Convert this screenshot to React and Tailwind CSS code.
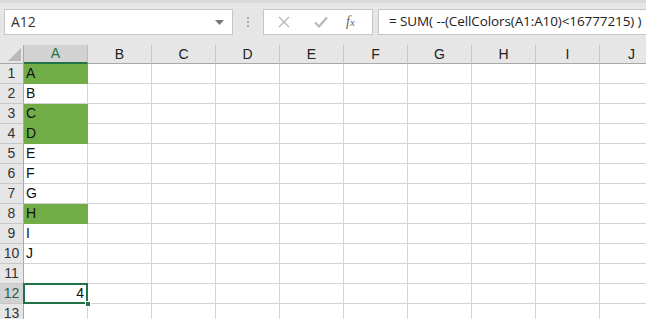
import React from "react";

const cols = ["A", "B", "C", "D", "E", "F", "G", "H", "I", "J"];
const data = {
  1: { t: "A", g: true },
  2: { t: "B" },
  3: { t: "C", g: true },
  4: { t: "D", g: true },
  5: { t: "E" },
  6: { t: "F" },
  7: { t: "G" },
  8: { t: "H", g: true },
  9: { t: "I" },
  10: { t: "J" },
};
const rows = Array.from({ length: 13 }, (_, i) => i + 1);

export default function App() {
  return (
    <div className="w-[646px] h-[319px] overflow-hidden bg-white font-['Open_Sans','Liberation_Sans',sans-serif]">
      {/* formula bar */}
      <div className="h-[45px] bg-[#e6e6e6] border-t-[3px] border-[#dadada] flex items-start pt-[6px]">
        <div className="ml-[4px] w-[229px] h-[26px] shrink-0 bg-white border border-[#c6c6c6] flex items-center justify-between pl-[6px] pr-[8px]">
          <span className="text-[14px] text-[#333] leading-none">A12</span>
          <svg width="9" height="5" viewBox="0 0 9 5"><path d="M0 0 L9 0 L4.5 5 Z" fill="#777" /></svg>
        </div>
        <div className="w-[30px] h-[26px] shrink-0 flex flex-col items-center justify-center gap-[2px]">
          <div className="w-[2px] h-[2px] bg-[#aaa]" />
          <div className="w-[2px] h-[2px] bg-[#aaa]" />
          <div className="w-[2px] h-[2px] bg-[#aaa]" />
        </div>
        <div className="w-[110px] h-[26px] shrink-0 bg-white border border-[#c6c6c6] flex items-center">
          <svg className="ml-[14px]" width="12" height="12" viewBox="0 0 12 12"><path d="M1 1 L11 11 M11 1 L1 11" stroke="#b8b8b8" strokeWidth="1.4" /></svg>
          <svg className="ml-[24px]" width="14" height="12" viewBox="0 0 14 12"><path d="M1 6.5 L5 10.5 L13 1.5" stroke="#b8b8b8" strokeWidth="2.2" fill="none" /></svg>
          <span className="ml-[18px] text-[14px] italic text-[#666] font-['Liberation_Serif',serif] leading-none">f<span className="text-[11px]">x</span></span>
        </div>
        <div className="ml-[5px] flex-1 h-[26px] bg-white border border-[#c6c6c6] border-r-0 flex items-center pl-[10px] overflow-hidden">
          <span className="text-[13.5px] text-[#222] whitespace-nowrap leading-none tracking-[-0.1px]">= SUM( --(CellColors(A1:A10)&lt;16777215) )</span>
        </div>
      </div>
      {/* grid */}
      <div className="grid grid-cols-[24px_repeat(10,64px)] grid-rows-[19px_repeat(13,20px)] text-[14px] font-['Liberation_Sans',sans-serif]">
        <div className="bg-[#e6e6e6] border-r border-b border-[#a8a8a8] relative">
          <svg className="absolute right-[2px] bottom-[2px]" width="13" height="13" viewBox="0 0 13 13"><path d="M13 0 L13 13 L0 13 Z" fill="#b9b9b9" /></svg>
        </div>
        {cols.map((c) => (
          <div
            key={c}
            className={
              c === "A"
                ? "bg-[#d2d2d2] border-r border-[#bcbcbc] border-b-2 border-b-[#217346] flex items-center justify-center text-[#217346]"
                : "bg-[#e6e6e6] border-r border-[#c8c8c8] border-b border-b-[#a8a8a8] flex items-center justify-center text-[#222]"
            }
          >
            {c}
          </div>
        ))}
        {rows.map((r) => (
          <React.Fragment key={r}>
            <div
              className={
                r === 12
                  ? "bg-[#d2d2d2] border-r border-[#a8a8a8] border-b border-b-[#c8c8c8] flex items-center justify-center text-[#2d5a42]"
                  : "bg-[#e6e6e6] border-r border-[#a8a8a8] border-b border-b-[#c8c8c8] flex items-center justify-center text-[#333]"
              }
            >
              {r}
            </div>
            {cols.map((c) => {
              const d = c === "A" ? data[r] : null;
              if (c === "A" && r === 12) {
                return (
                  <div key={c} className="relative border-r border-b border-[#d4d4d4]">
                    <div className="absolute left-[-1px] top-[-1px] right-[-1px] bottom-[-1px] border-2 border-[#217346] flex items-center justify-end pr-[2px] text-[#111]">
                      4
                    </div>
                    <div className="absolute right-[-4px] bottom-[-4px] w-[6px] h-[6px] bg-[#217346] border border-white" />
                  </div>
                );
              }
              return (
                <div
                  key={c}
                  className={
                    d && d.g
                      ? "bg-[#70ad47] border-r border-b border-[#70ad47] flex items-center pl-[2px] text-[#111]"
                      : "border-r border-b border-[#d4d4d4] flex items-center pl-[2px] text-[#111]"
                  }
                >
                  {d ? d.t : ""}
                </div>
              );
            })}
          </React.Fragment>
        ))}
      </div>
    </div>
  );
}
